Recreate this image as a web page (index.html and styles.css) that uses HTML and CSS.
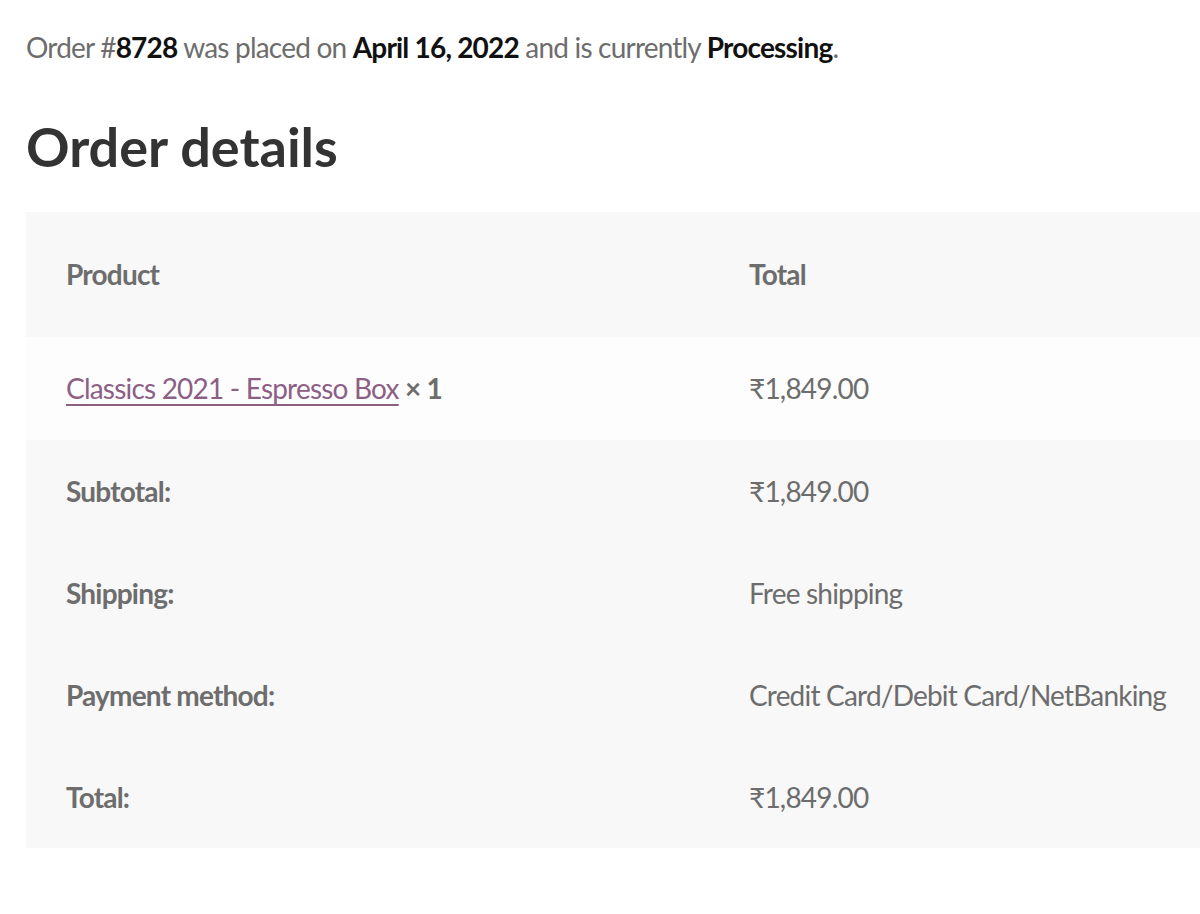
FILE: index.html
```html
<!DOCTYPE html>
<html lang="en">
<head>
<meta charset="utf-8">
<title>Order details</title>
<link rel="stylesheet" href="styles.css">
</head>
<body>
<main class="page">
  <p class="notice">Order #<mark class="strong">8728</mark> was placed on <mark class="strong">April 16, 2022</mark> and is currently <mark class="strong">Processing</mark>.</p>
  <h2 class="title">Order details</h2>
  <table class="order-table">
    <thead>
      <tr>
        <th class="col-product">Product</th>
        <th class="col-total">Total</th>
      </tr>
    </thead>
    <tbody>
      <tr>
        <td class="col-product"><a class="product-link" href="#">Classics 2021 - Espresso Box</a> <strong class="qty">× 1</strong></td>
        <td class="col-total">₹1,849.00</td>
      </tr>
    </tbody>
    <tfoot>
      <tr><th>Subtotal:</th><td>₹1,849.00</td></tr>
      <tr><th>Shipping:</th><td>Free shipping</td></tr>
      <tr><th>Payment method:</th><td>Credit Card/Debit Card/NetBanking</td></tr>
      <tr><th>Total:</th><td>₹1,849.00</td></tr>
    </tfoot>
  </table>
</main>
</body>
</html>
```
FILE: styles.css
```css
html, body {
  margin: 0;
  padding: 0;
  background: #ffffff;
  overflow: hidden;
}

body {
  font-family: Lato, "Liberation Sans", sans-serif;
  font-size: 28px;
  line-height: 45px;
  letter-spacing: -0.8px;
  color: #6d6d6d;
}

.page {
  padding: 25px 0 0 26px;
}

.notice {
  margin: 0;
}

.strong {
  background: none;
  color: #111111;
  font-weight: 700;
}

.title {
  margin: 44px 0 33px;
  font-size: 54px;
  line-height: 65px;
  font-weight: 700;
  letter-spacing: 0;
  color: #333333;
}

.order-table {
  width: 1174px;
  border-collapse: collapse;
  border-spacing: 0;
  table-layout: fixed;
}

.order-table th,
.order-table td {
  text-align: left;
  vertical-align: middle;
  padding: 28.5px 0 28.5px 40px;
  white-space: nowrap;
}

.order-table th {
  font-weight: 700;
}

.order-table thead th {
  background: #f8f8f8;
  padding-top: 40px;
  padding-bottom: 40px;
}

.order-table .col-product {
  width: 643px;
}

.order-table tbody td {
  background: #fdfdfd;
  padding-top: 29px;
  padding-bottom: 29px;
}

.order-table tfoot th,
.order-table tfoot td {
  background: #f8f8f8;
}

.product-link {
  color: #8d5f86;
  text-decoration: underline;
  text-decoration-thickness: 2px;
  text-underline-offset: 5px;
}

.qty {
  font-weight: 700;
}
```
